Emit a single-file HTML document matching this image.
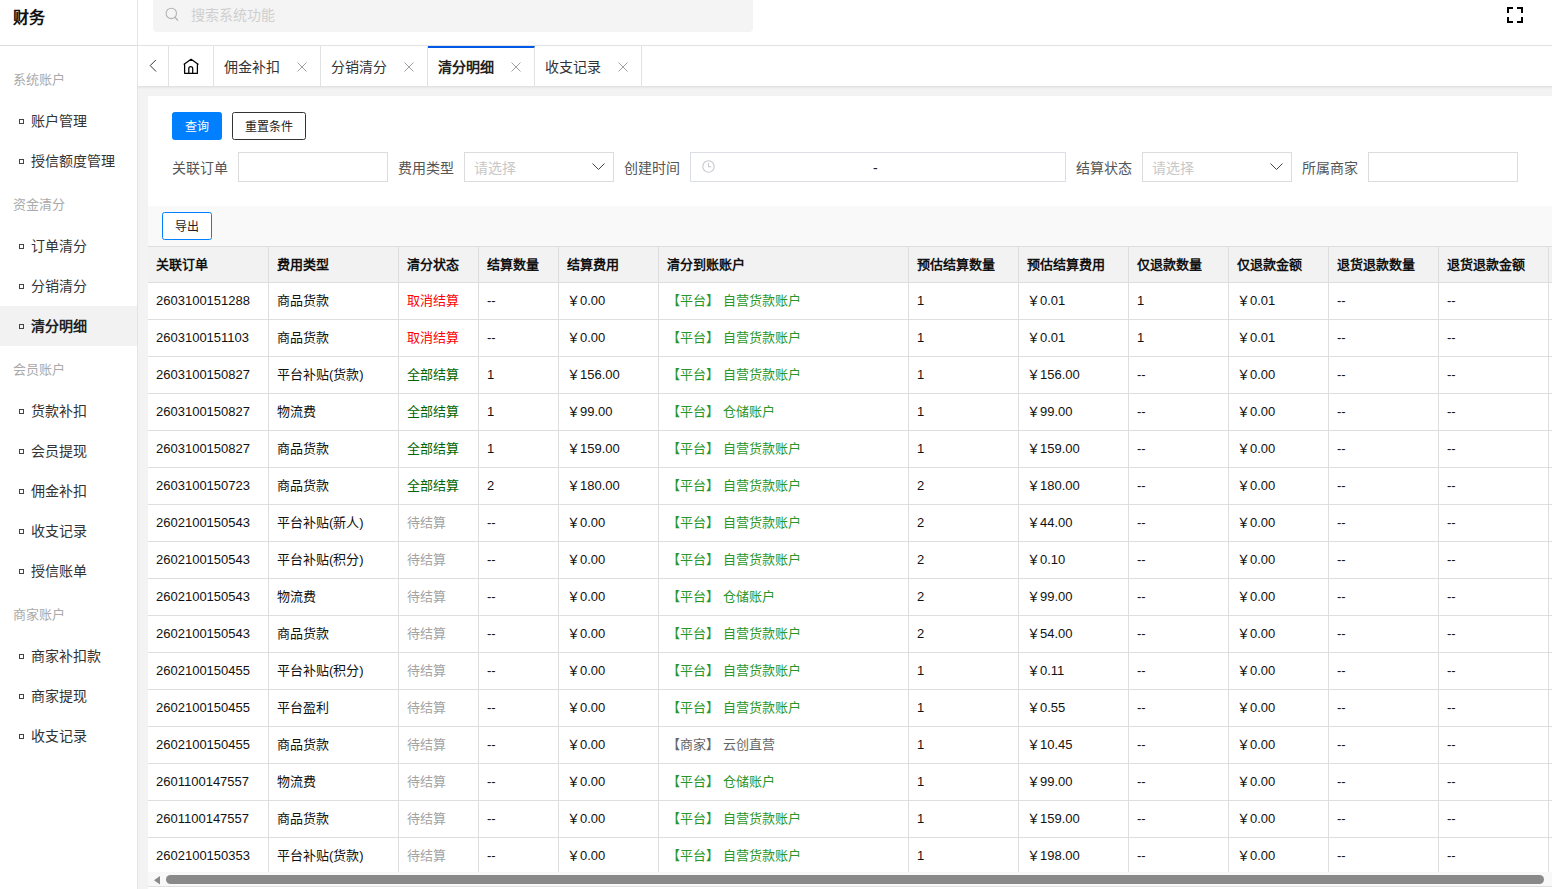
<!DOCTYPE html>
<html lang="zh-CN">
<head>
<meta charset="utf-8">
<style>
*{box-sizing:border-box;margin:0;padding:0}
html,body{width:1552px;height:889px;overflow:hidden;background:#fff;font-family:"Liberation Sans",sans-serif;color:#333}
.abs{position:absolute}
#side{position:absolute;left:0;top:0;width:138px;height:889px;background:#fff;border-right:1px solid #e4e4e4}
#side .hd{position:absolute;left:0;top:0;width:137px;height:46px;border-bottom:1px solid #dcdcdc}
#side .hd span{position:absolute;left:13px;top:7px;font-size:16px;font-weight:bold;color:#111;line-height:22px}
.sec{position:absolute;left:13px;font-size:13px;color:#aaa;line-height:18px}
.it{position:absolute;left:0;width:137px;height:40px;font-size:14px;color:#333;line-height:40px}
.it i{position:absolute;left:19px;top:18px;width:5px;height:5px;border:1px solid #444}
.it span{position:absolute;left:31px;top:0}
.it.on{background:#f2f2f2}
.it.on span{font-weight:bold;color:#222}
#top{position:absolute;left:138px;top:0;width:1414px;height:46px;border-bottom:1px solid #e2e2e2;background:#fff}
#search{position:absolute;left:153px;top:0;width:600px;height:32px;background:#f4f4f4;border-radius:0 0 4px 4px}
#search .ph{position:absolute;left:38px;top:7px;font-size:14px;color:#cfcfcf;line-height:16px}
#tabs{position:absolute;left:138px;top:46px;width:1414px;height:40px;background:#fff}
.tab{position:absolute;top:0;height:40px;border-right:1px solid #e2e2e2;font-size:14px;color:#333;line-height:40px}
.tab .x{position:absolute;top:16px;width:10px;height:10px}
#shadow{position:absolute;left:138px;top:86px;width:1414px;height:10px;background:linear-gradient(#e2e2e2 0 1px,#e9e9e9 1px 2px,#efefef 2px 3px,#f3f3f3 3px)}
#content{position:absolute;left:138px;top:96px;width:1414px;height:793px;background:#f3f3f3}
#panel{position:absolute;left:148px;top:96px;width:1404px;height:110px;background:#fff}
.btn{position:absolute;height:28px;font-size:12px;line-height:28px;text-align:center;border-radius:2.5px}
.lbl{position:absolute;top:158px;font-size:14px;color:#555;line-height:20px}
.inp{position:absolute;top:152px;width:150px;height:30px;border:1px solid #dcdcdc;background:#fff}
.inp .ph{position:absolute;left:9px;top:6px;font-size:14px;color:#c8c8c8;line-height:18px}
#tarea{position:absolute;left:148px;top:206px;width:1404px;height:683px;background:#f9f9f9}
table{position:absolute;left:148px;top:246px;border-collapse:separate;border-spacing:0;table-layout:fixed;width:1500px;background:#fff}
td,th{height:37px;border-right:1px solid #dedede;border-bottom:1px solid #dedede;font-size:13px;line-height:16px;text-align:left;padding:0 0 1px 8px;white-space:nowrap;color:#111;overflow:hidden;vertical-align:middle}
th{background:#f2f2f2;font-weight:bold;height:37px;color:#111;border-top:1px solid #dedede;padding:1px 0 0 8px}
.st-c{color:#f00}.st-a{color:#006400}.st-w{color:#a3a3a3}
.ac-p{color:#2a962a}.ac-m{color:#666}
#sb{position:absolute;left:148px;top:872px;width:1404px;height:15px;background:#f8f8f8;border-bottom:1px solid #e0e0e0}
#bot{position:absolute;left:148px;top:887px;width:1404px;height:2px;background:#fff}
</style>
</head>
<body>
<div id="side">
  <div class="hd"><span>财务</span></div>
  <div class="sec" style="top:71px">系统账户</div>
  <div class="it" style="top:101px"><i></i><span>账户管理</span></div>
  <div class="it" style="top:141px"><i></i><span>授信额度管理</span></div>
  <div class="sec" style="top:196px">资金清分</div>
  <div class="it" style="top:226px"><i></i><span>订单清分</span></div>
  <div class="it" style="top:266px"><i></i><span>分销清分</span></div>
  <div class="it on" style="top:306px"><i></i><span>清分明细</span></div>
  <div class="sec" style="top:361px">会员账户</div>
  <div class="it" style="top:391px"><i></i><span>货款补扣</span></div>
  <div class="it" style="top:431px"><i></i><span>会员提现</span></div>
  <div class="it" style="top:471px"><i></i><span>佣金补扣</span></div>
  <div class="it" style="top:511px"><i></i><span>收支记录</span></div>
  <div class="it" style="top:551px"><i></i><span>授信账单</span></div>
  <div class="sec" style="top:606px">商家账户</div>
  <div class="it" style="top:636px"><i></i><span>商家补扣款</span></div>
  <div class="it" style="top:676px"><i></i><span>商家提现</span></div>
  <div class="it" style="top:716px"><i></i><span>收支记录</span></div>
</div>
<div id="top"></div>
<div id="search">
  <svg class="abs" style="left:11px;top:7px" width="16" height="16" viewBox="0 0 16 16"><circle cx="7.3" cy="6.4" r="5.2" fill="none" stroke="#b3b3b3" stroke-width="1.1"/><line x1="11" y1="10.2" x2="14" y2="13.6" stroke="#b3b3b3" stroke-width="1.3"/></svg>
  <span class="ph">搜索系统功能</span>
</div>
<svg class="abs" style="left:1507px;top:7px" width="16" height="16" viewBox="0 0 16 16"><path d="M0 0H6V2H2V6H0ZM10 0H16V6H14V2H10ZM0 10H2V14H6V16H0ZM14 10H16V16H10V14H14Z" fill="#000"/></svg>
<div id="tabs">
  <div class="tab" style="left:0;width:31px;border-left:0"><svg class="abs" style="left:10px;top:13px" width="9" height="15" viewBox="0 0 9 15"><path d="M7.9 0.9L2.2 6.6L8.1 12.5" fill="none" stroke="#333" stroke-width="1"/></svg></div>
  <div class="tab" style="left:31px;width:45px"><svg class="abs" style="left:14px;top:12px" width="17" height="17" viewBox="0 0 17 17"><path d="M0.7 6.6L8.1 1.3L15.5 6.6M1.6 6V15.3H14.4V6M5.8 15.3V10.5A1.95 1.95 0 0 1 9.7 10.5V15.3" fill="none" stroke="#000" stroke-width="1.25" stroke-linejoin="round"/></svg></div>
  <div class="tab" style="left:76px;width:107px"><span class="abs" style="left:10px;top:1px">佣金补扣</span><svg class="x" style="left:83px" viewBox="0 0 10 10"><path d="M0.5 0.5L9.5 9.5M9.5 0.5L0.5 9.5" stroke="#a0a0a0" stroke-width="1"/></svg></div>
  <div class="tab" style="left:183px;width:107px"><span class="abs" style="left:10px;top:1px">分销清分</span><svg class="x" style="left:83px" viewBox="0 0 10 10"><path d="M0.5 0.5L9.5 9.5M9.5 0.5L0.5 9.5" stroke="#a0a0a0" stroke-width="1"/></svg></div>
  <div class="tab" style="left:290px;width:107px;border-top:2px solid #0058e6"><span class="abs" style="left:10px;top:-1px;font-weight:bold;color:#222">清分明细</span><svg class="x" style="left:83px;top:14px" viewBox="0 0 10 10"><path d="M0.5 0.5L9.5 9.5M9.5 0.5L0.5 9.5" stroke="#a0a0a0" stroke-width="1"/></svg></div>
  <div class="tab" style="left:397px;width:107px"><span class="abs" style="left:10px;top:1px">收支记录</span><svg class="x" style="left:83px" viewBox="0 0 10 10"><path d="M0.5 0.5L9.5 9.5M9.5 0.5L0.5 9.5" stroke="#a0a0a0" stroke-width="1"/></svg></div>
</div>
<div id="content"></div>
<div id="shadow"></div>
<div id="panel"></div>
<div class="btn" style="left:172px;top:112px;width:50px;background:#0080ff;color:#fff;border:1px solid #0080ff;border-radius:2.5px">查询</div>
<div class="btn" style="left:232px;top:112px;width:74px;background:#fff;color:#222;border:1px solid #333">重置条件</div>
<div class="lbl" style="left:172px">关联订单</div>
<div class="inp" style="left:238px"></div>
<div class="lbl" style="left:398px">费用类型</div>
<div class="inp" style="left:464px"><span class="ph">请选择</span><svg class="abs" style="left:127px;top:10px" width="13" height="8" viewBox="0 0 13 8"><path d="M0.5 0.5L6.5 6.5L12.5 0.5" fill="none" stroke="#444" stroke-width="1"/></svg></div>
<div class="lbl" style="left:624px">创建时间</div>
<div class="inp" style="left:690px;width:376px;border-color:#dcdee6"><svg class="abs" style="left:11px;top:7px" width="13" height="13" viewBox="0 0 13 13"><circle cx="6.5" cy="6.5" r="5.7" fill="none" stroke="#c8c8d0" stroke-width="1.1"/><path d="M6.5 3V6.8H9.3" fill="none" stroke="#c8c8d0" stroke-width="1.1"/></svg><span class="abs" style="left:182px;top:7px;font-size:14px;color:#222">-</span></div>
<div class="lbl" style="left:1076px">结算状态</div>
<div class="inp" style="left:1142px"><span class="ph">请选择</span><svg class="abs" style="left:127px;top:10px" width="13" height="8" viewBox="0 0 13 8"><path d="M0.5 0.5L6.5 6.5L12.5 0.5" fill="none" stroke="#444" stroke-width="1"/></svg></div>
<div class="lbl" style="left:1302px">所属商家</div>
<div class="inp" style="left:1368px"></div>
<div id="tarea"></div>
<div class="btn" style="left:162px;top:212px;width:50px;background:#fff;color:#222;border:1px solid #0080ff;border-radius:2.5px">导出</div>
<table>
<colgroup><col style="width:121px"><col style="width:130px"><col style="width:80px"><col style="width:80px"><col style="width:100px"><col style="width:250px"><col style="width:110px"><col style="width:110px"><col style="width:100px"><col style="width:100px"><col style="width:110px"><col style="width:110px"><col style="width:99px"></colgroup>
<thead><tr><th>关联订单</th><th>费用类型</th><th>清分状态</th><th>结算数量</th><th>结算费用</th><th>清分到账账户</th><th>预估结算数量</th><th>预估结算费用</th><th>仅退款数量</th><th>仅退款金额</th><th>退货退款数量</th><th>退货退款金额</th><th></th></tr></thead>
<tbody>
<tr><td>2603100151288</td><td>商品货款</td><td><span class="st-c">取消结算</span></td><td>--</td><td>￥0.00</td><td><span class="ac-p">【平台】 自营货款账户</span></td><td>1</td><td>￥0.01</td><td>1</td><td>￥0.01</td><td>--</td><td>--</td><td></td></tr>
<tr><td>2603100151103</td><td>商品货款</td><td><span class="st-c">取消结算</span></td><td>--</td><td>￥0.00</td><td><span class="ac-p">【平台】 自营货款账户</span></td><td>1</td><td>￥0.01</td><td>1</td><td>￥0.01</td><td>--</td><td>--</td><td></td></tr>
<tr><td>2603100150827</td><td>平台补贴(货款)</td><td><span class="st-a">全部结算</span></td><td>1</td><td>￥156.00</td><td><span class="ac-p">【平台】 自营货款账户</span></td><td>1</td><td>￥156.00</td><td>--</td><td>￥0.00</td><td>--</td><td>--</td><td></td></tr>
<tr><td>2603100150827</td><td>物流费</td><td><span class="st-a">全部结算</span></td><td>1</td><td>￥99.00</td><td><span class="ac-p">【平台】 仓储账户</span></td><td>1</td><td>￥99.00</td><td>--</td><td>￥0.00</td><td>--</td><td>--</td><td></td></tr>
<tr><td>2603100150827</td><td>商品货款</td><td><span class="st-a">全部结算</span></td><td>1</td><td>￥159.00</td><td><span class="ac-p">【平台】 自营货款账户</span></td><td>1</td><td>￥159.00</td><td>--</td><td>￥0.00</td><td>--</td><td>--</td><td></td></tr>
<tr><td>2603100150723</td><td>商品货款</td><td><span class="st-a">全部结算</span></td><td>2</td><td>￥180.00</td><td><span class="ac-p">【平台】 自营货款账户</span></td><td>2</td><td>￥180.00</td><td>--</td><td>￥0.00</td><td>--</td><td>--</td><td></td></tr>
<tr><td>2602100150543</td><td>平台补贴(新人)</td><td><span class="st-w">待结算</span></td><td>--</td><td>￥0.00</td><td><span class="ac-p">【平台】 自营货款账户</span></td><td>2</td><td>￥44.00</td><td>--</td><td>￥0.00</td><td>--</td><td>--</td><td></td></tr>
<tr><td>2602100150543</td><td>平台补贴(积分)</td><td><span class="st-w">待结算</span></td><td>--</td><td>￥0.00</td><td><span class="ac-p">【平台】 自营货款账户</span></td><td>2</td><td>￥0.10</td><td>--</td><td>￥0.00</td><td>--</td><td>--</td><td></td></tr>
<tr><td>2602100150543</td><td>物流费</td><td><span class="st-w">待结算</span></td><td>--</td><td>￥0.00</td><td><span class="ac-p">【平台】 仓储账户</span></td><td>2</td><td>￥99.00</td><td>--</td><td>￥0.00</td><td>--</td><td>--</td><td></td></tr>
<tr><td>2602100150543</td><td>商品货款</td><td><span class="st-w">待结算</span></td><td>--</td><td>￥0.00</td><td><span class="ac-p">【平台】 自营货款账户</span></td><td>2</td><td>￥54.00</td><td>--</td><td>￥0.00</td><td>--</td><td>--</td><td></td></tr>
<tr><td>2602100150455</td><td>平台补贴(积分)</td><td><span class="st-w">待结算</span></td><td>--</td><td>￥0.00</td><td><span class="ac-p">【平台】 自营货款账户</span></td><td>1</td><td>￥0.11</td><td>--</td><td>￥0.00</td><td>--</td><td>--</td><td></td></tr>
<tr><td>2602100150455</td><td>平台盈利</td><td><span class="st-w">待结算</span></td><td>--</td><td>￥0.00</td><td><span class="ac-p">【平台】 自营货款账户</span></td><td>1</td><td>￥0.55</td><td>--</td><td>￥0.00</td><td>--</td><td>--</td><td></td></tr>
<tr><td>2602100150455</td><td>商品货款</td><td><span class="st-w">待结算</span></td><td>--</td><td>￥0.00</td><td><span class="ac-m">【商家】 云创直营</span></td><td>1</td><td>￥10.45</td><td>--</td><td>￥0.00</td><td>--</td><td>--</td><td></td></tr>
<tr><td>2601100147557</td><td>物流费</td><td><span class="st-w">待结算</span></td><td>--</td><td>￥0.00</td><td><span class="ac-p">【平台】 仓储账户</span></td><td>1</td><td>￥99.00</td><td>--</td><td>￥0.00</td><td>--</td><td>--</td><td></td></tr>
<tr><td>2601100147557</td><td>商品货款</td><td><span class="st-w">待结算</span></td><td>--</td><td>￥0.00</td><td><span class="ac-p">【平台】 自营货款账户</span></td><td>1</td><td>￥159.00</td><td>--</td><td>￥0.00</td><td>--</td><td>--</td><td></td></tr>
<tr><td>2602100150353</td><td>平台补贴(货款)</td><td><span class="st-w">待结算</span></td><td>--</td><td>￥0.00</td><td><span class="ac-p">【平台】 自营货款账户</span></td><td>1</td><td>￥198.00</td><td>--</td><td>￥0.00</td><td>--</td><td>--</td><td></td></tr>
</tbody>
</table>
<div id="sb">
  <svg class="abs" style="left:6px;top:4px" width="7" height="9" viewBox="0 0 7 9"><path d="M6 0V8.5L0 4.25Z" fill="#8a8a8a"/></svg>
  <div class="abs" style="left:18px;top:3px;width:1378px;height:9px;border-radius:4.5px;background:#898989"></div>
</div>
<div id="bot"></div>
</body>
</html>
